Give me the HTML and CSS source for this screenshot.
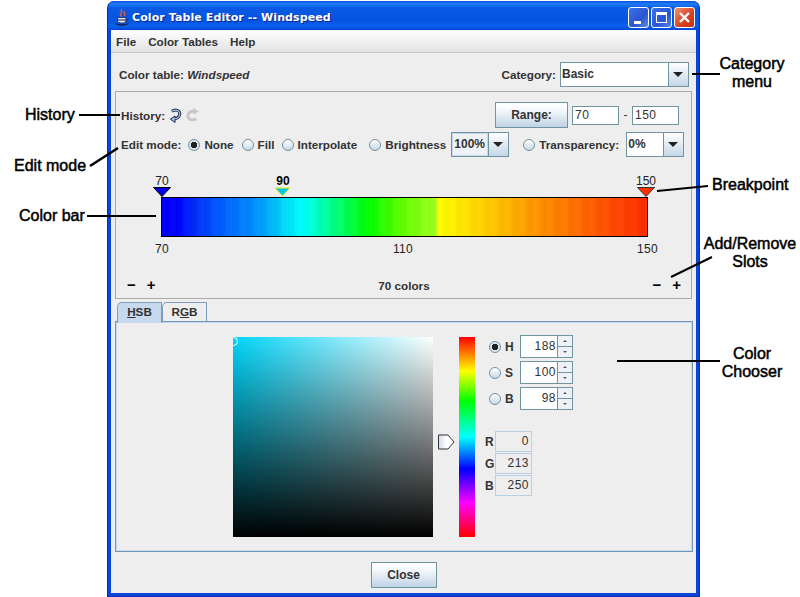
FILE: index.html
```html
<!DOCTYPE html>
<html lang="en">
<head>
    <meta charset="UTF-8">
    <title>Color Table Editor -- Windspeed</title>
    <link rel="stylesheet" href="styles.css">
</head>
<body>
    <div class="window">
        <div class="titlebar">
            <svg class="java-icon" width="16" height="18" viewBox="0 0 16 18">
                <path d="M8 1c-2 2 1 3-1 4.500s1 3 1 3M10.500 3c-1 2 1 2.500 0 5" fill="none" stroke="#e0583a" stroke-width="1.500"/>
                <path d="M3.500 9.500h8.500v3c0 2-2 2.500-4.200 2.500s-4.300-.5-4.300-2.500z" fill="#e8ecf4" stroke="#2b3560"/>
                <path d="M3.500 12h8.500" stroke="#2b3560" stroke-width="1.200"/>
                <path d="M12 10.500c2.500 0 2 3-.5 3" fill="none" stroke="#2b3560"/>
                <path d="M1.500 15.500c3 2 9.500 2 13 0" fill="none" stroke="#1a2248" stroke-width="1.300"/>
            </svg>
            <span class="title-text">Color Table Editor -- Windspeed</span>
            <div class="win-buttons">
                <div class="win-btn"><span class="min-glyph"></span></div>
                <div class="win-btn"><span class="max-glyph"></span></div>
                <div class="win-btn win-close">
                    <svg width="13" height="13" viewBox="0 0 13 13"><path d="M2 2l9 9M11 2l-9 9" stroke="#fff" stroke-width="2.400"/></svg>
                </div>
            </div>
        </div>

        <div class="menubar">
            <span>File</span>
            <span>Color Tables</span>
            <span>Help</span>
        </div>

        <div class="client">
            <div class="header-row">
                <span class="lbl">Color table: <em>Windspeed</em></span>
                <div class="category">
                    <span class="lbl">Category:</span>
                    <div class="combo combo-cat">
                        <span class="combo-value">Basic</span>
                        <span class="combo-arrow"></span>
                    </div>
                </div>
            </div>

            <div class="editor-panel">
                <div class="row-history">
                    <div class="history">
                        <span class="lbl">History:</span>
                        <svg class="hist-icon" width="13" height="15" viewBox="0 0 14 16">
                            <path d="M3 3.500C6 1.500 10.500 1.500 11.500 5c.8 3.500-2 6-5 6.500l-2.500 .5" fill="none" stroke="#14224a" stroke-width="3.200"/>
                            <path d="M6.500 8.500L1.500 12l5 3.500z" fill="#a9c0e2" stroke="#14224a"/>
                            <path d="M3 3.500C6 1.500 10.500 1.500 11.500 5c.8 3.500-2 6-5 6.500l-1.500 .3" fill="none" stroke="#a9c0e2" stroke-width="1.300"/>
                        </svg>
                        <svg class="hist-icon" width="13" height="15" viewBox="0 0 14 16">
                            <path d="M9 3.500C5 3 2 5 2 8.500s4.500 5.500 9 3" fill="none" stroke="#c6c6c6" stroke-width="3"/>
                            <path d="M8 0l5.500 3.500L8 7.500z" fill="#c6c6c6"/>
                        </svg>
                    </div>
                    <div class="range">
                        <button class="btn btn-range" type="button">Range:</button>
                        <span class="field range-field">70</span>
                        <span class="range-dash">-</span>
                        <span class="field range-field">150</span>
                    </div>
                </div>

                <div class="row-mode">
                    <span class="lbl mode-lbl">Edit mode:</span>
                    <span class="radio radio-on"></span><span class="lbl mode-none">None</span>
                    <span class="radio"></span><span class="lbl mode-fill">Fill</span>
                    <span class="radio"></span><span class="lbl mode-interp">Interpolate</span>
                    <span class="radio"></span><span class="lbl mode-bright">Brightness</span>
                    <div class="combo combo-bright">
                        <span class="combo-value combo-focus">100%</span>
                        <span class="combo-arrow"></span>
                    </div>
                    <span class="radio radio-transp"></span><span class="lbl mode-transp">Transparency:</span>
                    <div class="combo combo-transp">
                        <span class="combo-value">0%</span>
                        <span class="combo-arrow"></span>
                    </div>
                </div>

                <div class="bar-wrap">
                    <div class="bar"></div>
                    <div class="bp" style="left: 1px">
                        <span class="bp-val">70</span>
                        <svg width="18" height="10" viewBox="0 0 18 10"><path d="M0.500 0.500h17L9 9.500z" fill="#0000e8" stroke="#000"/></svg>
                    </div>
                    <div class="bp" style="left: 122px">
                        <span class="bp-val bp-active">90</span>
                        <svg width="18" height="10" viewBox="0 0 18 10"><path d="M1 1h15L8.500 9z" fill="#00c8f0" stroke="#ffe800"/></svg>
                    </div>
                    <div class="bp" style="left: 485px">
                        <span class="bp-val">150</span>
                        <svg width="18" height="10" viewBox="0 0 18 10"><path d="M0.500 0.500h17L9 9.500z" fill="#ff3000" stroke="#333"/></svg>
                    </div>
                </div>
                <div class="scale">
                    <span>70</span>
                    <span>110</span>
                    <span>150</span>
                </div>

                <div class="slots">
                    <div class="slot-btns"><span>&minus;</span><span>+</span></div>
                    <span class="lbl">70 colors</span>
                    <div class="slot-btns"><span>&minus;</span><span>+</span></div>
                </div>
            </div>

            <div class="tabs">
                <span class="tab tab-on"><u>H</u>SB</span>
                <span class="tab">R<u>G</u>B</span>
            </div>
            <div class="tab-panel">
                <div class="sv-box"><span class="sv-mark"></span></div>
                <div class="hue-strip">
                    <svg class="hue-thumb" width="17" height="16" viewBox="0 0 17 16">
                        <defs>
                            <linearGradient id="thumbfill" x1="0" x2="1" y1="0" y2="0">
                                <stop offset="0" stop-color="#cfdcea"/>
                                <stop offset="0.500" stop-color="#fff"/>
                                <stop offset="1" stop-color="#fff"/>
                            </linearGradient>
                        </defs>
                        <path d="M0.500 1h9.500l6 7-6 7H0.500z" fill="url(#thumbfill)" stroke="#333"/>
                    </svg>
                </div>
                <div class="chooser-side">
                    <div class="hsb-row">
                        <span class="radio radio-on"></span><span class="lbl hsb-lbl">H</span>
                        <div class="spinner"><span class="spin-val">188</span><span class="spin-arrows"><i class="up"></i><i class="down"></i></span></div>
                    </div>
                    <div class="hsb-row">
                        <span class="radio"></span><span class="lbl hsb-lbl">S</span>
                        <div class="spinner"><span class="spin-val">100</span><span class="spin-arrows"><i class="up"></i><i class="down"></i></span></div>
                    </div>
                    <div class="hsb-row">
                        <span class="radio"></span><span class="lbl hsb-lbl">B</span>
                        <div class="spinner"><span class="spin-val">98</span><span class="spin-arrows"><i class="up"></i><i class="down"></i></span></div>
                    </div>
                    <div class="rgb-rows">
                        <div class="rgb-row"><span class="lbl rgb-lbl">R</span><span class="rgb-val">0</span></div>
                        <div class="rgb-row"><span class="lbl rgb-lbl">G</span><span class="rgb-val">213</span></div>
                        <div class="rgb-row"><span class="lbl rgb-lbl">B</span><span class="rgb-val">250</span></div>
                    </div>
                </div>
            </div>

            <div class="footer">
                <button class="btn btn-close" type="button">Close</button>
            </div>
        </div>
    </div>

    <!-- callouts around the window -->
    <svg class="callout-lines" width="800" height="597" viewBox="0 0 800 597">
        <g stroke="#000" stroke-width="2" fill="none">
            <path d="M79 115H120"/>
            <path d="M90 166L118 148" stroke-width="2.500"/>
            <path d="M87 216H156"/>
            <path d="M692 74H720"/>
            <path d="M657 191L708 186"/>
            <path d="M671 277L712 257"/>
            <path d="M617 361H720"/>
        </g>
    </svg>
    <div class="note" style="left: 25px; top: 106px">History</div>
    <div class="note" style="left: 14px; top: 157px">Edit mode</div>
    <div class="note" style="left: 19px; top: 207px">Color bar</div>
    <div class="note note-c" style="left: 702px; top: 55px">Category<br>menu</div>
    <div class="note" style="left: 712px; top: 176px">Breakpoint</div>
    <div class="note note-c" style="left: 700px; top: 235px">Add/Remove<br>Slots</div>
    <div class="note note-c" style="left: 702px; top: 345px">Color<br>Chooser</div>
</body>
</html>
```

FILE: styles.css
```css
* {
    box-sizing: border-box;
}

html, body {
    margin: 0;
    padding: 0;
    height: 597px;
    overflow: hidden;
    background: #fff;
}

body {
    position: relative;
    font-family: "Liberation Sans", Arial, sans-serif;
    font-size: 12px;
    color: #333;
}

.window {
    margin: 1px 0 0 107px;
    width: 593px;
    height: 596px;
    display: flex;
    flex-direction: column;
    background: #0a45d8;
    border-radius: 7px 7px 0 0;
    padding: 0 3px 3px;
    border-left: 1px solid #0831a8;
    border-right: 1px solid #0831a8;
    border-bottom: 1px solid #0831a8;
}

.titlebar {
    height: 29px;
    margin: 0 -3px;
    padding: 3px 4px 0 6px;
    display: flex;
    align-items: center;
    border-radius: 7px 7px 0 0;
    background: linear-gradient(#0a52e0 0, #1f7cf4 3px, #0a5ae4 7px, #0553e2 20px, #0a62ee 25px, #0446d4 29px);
}

.java-icon {
    flex: none;
}

.title-text {
    margin-left: 2px;
    font-family: "DejaVu Sans", Verdana, sans-serif;
    font-weight: bold;
    font-size: 11px;
    letter-spacing: 0.1px;
    color: #fff;
    text-shadow: 1px 1px 0 #0a2a90;
}

.win-buttons {
    margin-left: auto;
    display: flex;
    gap: 2px;
}

.win-btn {
    width: 21px;
    height: 21px;
    border: 1px solid #fff;
    border-radius: 3px;
    background: linear-gradient(135deg, #3c70e8, #2a55d0 60%, #5a8af0);
    display: flex;
    align-items: center;
    justify-content: center;
    position: relative;
}

.win-close {
    background: linear-gradient(135deg, #f09070, #d84020 60%, #c83010);
}

.min-glyph {
    position: absolute;
    left: 5px;
    bottom: 3px;
    width: 7px;
    height: 3px;
    background: #fff;
}

.max-glyph {
    width: 11px;
    height: 11px;
    border: 1px solid #fff;
    border-top-width: 3px;
}

.menubar {
    height: 23px;
    padding-left: 5px;
    display: flex;
    align-items: center;
    gap: 12px;
    font-weight: bold;
    font-size: 11.700px;
    background: linear-gradient(#fff, #e2e2e2);
    border-bottom: 1px solid #c8c8c8;
}

.client {
    flex: 1;
    display: flex;
    flex-direction: column;
    background-color: #eee;
    background-image: conic-gradient(#f0f0f0 25%, #ececec 0 50%, #f0f0f0 0 75%, #ececec 0);
    background-size: 2px 2px;
}

.lbl {
    font-weight: bold;
    font-size: 11.700px;
    color: #333;
    white-space: nowrap;
}

.lbl em {
    font-style: italic;
}

.header-row {
    margin-top: 9px;
    height: 25px;
    padding: 0 7px 0 8px;
    display: flex;
    align-items: center;
    justify-content: space-between;
}

.category {
    display: flex;
    align-items: center;
    gap: 4px;
}

.combo {
    display: flex;
    flex: none;
    height: 25px;
    border: 1px solid #6f939f;
    background: #fff;
}

.combo-cat {
    width: 129px;
}

.combo-bright {
    width: 58px;
}

.combo-transp {
    width: 58px;
}

.combo-value {
    flex: 1;
    padding: 0 1px;
    line-height: 23px;
    font-weight: bold;
    font-size: 12px;
    color: #333;
}

.combo-focus {
    padding-left: 1px;
    background: #eef2f7;
    border: 1px solid #c6d7ea;
    line-height: 21px;
}

.combo-arrow {
    width: 20px;
    flex: none;
    border-left: 1px solid #6f939f;
    background: linear-gradient(#fff, #c4d6e8);
    position: relative;
}

.combo-arrow::after {
    content: "";
    position: absolute;
    left: 4px;
    top: 9px;
    border-left: 5px solid transparent;
    border-right: 5px solid transparent;
    border-top: 5px solid #222;
}

.editor-panel {
    margin: 4px 4px 0;
    height: 208px;
    border: 1px solid #aaa;
}

.row-history {
    margin-top: 10px;
    height: 26px;
    padding: 0 12px 0 5px;
    display: flex;
    align-items: center;
    justify-content: space-between;
}

.history {
    display: flex;
    align-items: center;
    gap: 4px;
}

.range {
    display: flex;
    align-items: center;
}

.btn {
    font-family: "Liberation Sans", Arial, sans-serif;
    font-weight: bold;
    font-size: 12px;
    color: #333;
    border: 1px solid #6f939f;
    background: linear-gradient(#fff 10%, #eef3f8 40%, #bfd2e6);
    padding: 0;
}

.btn-range {
    width: 73px;
    height: 26px;
}

.field {
    border: 1px solid #6f939f;
    background: #fff;
    font-size: 12px;
    color: #333;
    height: 19px;
    line-height: 17px;
    padding-left: 2px;
    letter-spacing: 0.5px;
}

.range-field {
    width: 47px;
}

.btn-range + .range-field {
    margin-left: 4px;
}

.range-dash {
    width: 13px;
    text-align: center;
}

.row-mode {
    margin-top: 4px;
    height: 25px;
    padding: 0 7px 0 5px;
    display: flex;
    align-items: center;
}

.mode-lbl {
    margin-right: 7px;
}

.mode-none {
    margin-right: 8px;
}

.mode-fill {
    margin-right: 7px;
}

.mode-interp {
    margin-right: 12px;
}

.mode-bright {
    margin-right: 5px;
}

.mode-transp {
    margin-right: 7px;
}

.radio {
    width: 12px;
    height: 12px;
    flex: none;
    margin-right: 4px;
    border-radius: 50%;
    border: 1px solid #6f939f;
    background: linear-gradient(#fff, #c8d8e8);
}

.radio-on {
    background: radial-gradient(circle, #222 0 3px, #dce6f0 3.500px);
}

.radio-transp {
    margin-left: 14px;
}

.bar-wrap {
    position: relative;
    margin: 40px 0 0 45px;
    width: 487px;
    height: 40px;
}

.bar {
    position: relative;
    height: 40px;
    border: 1px solid #000;
    background: linear-gradient(90deg,
        #0000ff 0, #0000ff 3%, #0030fa 7%, #0060ff 12.500%, #0090ff 19.300%,
        #00b8f8 22.800%, #00d5fa 24.800%, #00ffff 29%, #00ff99 34.300%,
        #00ff00 42.500%, #60ff00 49.500%, #a0ff20 56.500%, #ffff00 57%,
        #ffc800 68%, #ff9900 76%, #ff6000 88%, #ff2a00 100%);
}

/* the real bar is stepped, one band per color slot */
.bar::after {
    content: "";
    position: absolute;
    inset: 0;
    background: repeating-linear-gradient(90deg, rgba(0, 0, 0, 0.02) 0 7px, rgba(255, 255, 255, 0.02) 7px 14px);
}

.bp {
    position: absolute;
    bottom: 100%;
    width: 30px;
    margin-left: -15px;
    display: flex;
    flex-direction: column;
    align-items: center;
}

.bp svg {
    display: block;
}

.bp-val {
    font-size: 12px;
    line-height: 14px;
    margin-bottom: -1px;
    color: #222;
}

.bp-active {
    font-weight: bold;
    color: #000;
}

.scale {
    margin: 5px 0 0 39px;
    width: 503px;
    display: flex;
    justify-content: space-between;
    font-size: 12px;
    line-height: 14px;
    color: #222;
    letter-spacing: 0.3px;
}

.slots {
    margin-top: 22px;
    padding: 0 10px 0 11px;
    display: flex;
    align-items: center;
    justify-content: space-between;
}

.slot-btns {
    display: flex;
    gap: 11px;
    font-weight: bold;
    font-size: 15px;
    line-height: 14px;
    color: #000;
}

.tabs {
    margin-top: 3px;
    height: 19px;
    padding-left: 6px;
    display: flex;
    position: relative;
    z-index: 1;
}

.tab {
    width: 45px;
    height: 19px;
    border: 1px solid #7f9db9;
    border-bottom: none;
    border-radius: 5px 0 0 0;
    text-align: center;
    font-weight: bold;
    font-size: 11.700px;
    line-height: 18px;
    color: #333;
}

.tab-on {
    height: 21px;
    background: #c6d9ee;
}

.tab-panel {
    margin: 0 3px 0 4px;
    height: 231px;
    display: flex;
    padding: 15px 0 0 117px;
    border: 1px solid #7496b6;
    box-shadow: inset 0 0 0 1px #c6d9ee;
}

.sv-box {
    position: relative;
    overflow: hidden;
    width: 200px;
    height: 200px;
    background:
        linear-gradient(rgba(0, 0, 0, 0), #000),
        linear-gradient(90deg, #00d5fa, #fff);
}

.sv-mark {
    position: absolute;
    left: -4px;
    top: 0;
    width: 9px;
    height: 9px;
    border: 1px solid #fff;
    border-radius: 50%;
}

.hue-strip {
    position: relative;
    margin-left: 26px;
    width: 16px;
    height: 200px;
    background: linear-gradient(#ff0000, #ffff00 17%, #00ff00 32%, #00ffff 50%, #0000ff 66%, #ff00ff 83%, #ff0000);
}

.hue-thumb {
    position: absolute;
    left: -21px;
    top: 97px;
}

.chooser-side {
    margin: -2px 0 0 14px;
    width: 84px;
}

.hsb-row {
    display: flex;
    align-items: center;
    height: 23px;
    margin-bottom: 3px;
}

.hsb-lbl {
    width: 15px;
    font-size: 12px;
}

.spinner {
    width: 53px;
    height: 23px;
    display: flex;
    border: 1px solid #6f939f;
    background: #fff;
}

.spin-val {
    flex: 1;
    text-align: right;
    padding-right: 1px;
    line-height: 21px;
    font-size: 12px;
    color: #333;
    letter-spacing: 0.5px;
}

.spin-arrows {
    width: 15px;
    display: flex;
    flex-direction: column;
    border-left: 1px solid #6f939f;
}

.spin-arrows i {
    flex: 1;
    position: relative;
    background: #eef2f6;
}

.spin-arrows .down {
    border-top: 1px solid #6f939f;
}

.spin-arrows i::after {
    content: "";
    position: absolute;
    left: 5px;
    top: 4px;
    border-left: 2px solid transparent;
    border-right: 2px solid transparent;
}

.spin-arrows .up::after {
    border-bottom: 2px solid #555;
}

.spin-arrows .down::after {
    border-top: 2px solid #555;
}

.rgb-rows {
    margin: 21px 0 0 -4px;
}

.rgb-row {
    display: flex;
    align-items: center;
    height: 21px;
    margin-bottom: 1px;
}

.rgb-lbl {
    width: 10px;
    font-size: 12px;
}

.rgb-val {
    width: 37px;
    height: 21px;
    line-height: 19px;
    border: 1px solid #b8cfe5;
    text-align: right;
    padding-right: 2px;
    font-size: 12px;
    color: #333;
    letter-spacing: 0.5px;
}

.footer {
    flex: 1;
    display: flex;
    justify-content: center;
    padding-top: 10px;
}

.btn-close {
    width: 66px;
    height: 26px;
}

.callout-lines {
    position: absolute;
    left: 0;
    top: 0;
    pointer-events: none;
}

.note {
    position: absolute;
    font-size: 16px;
    line-height: 18px;
    -webkit-text-stroke: 0.5px #000;
    color: #000;
    white-space: nowrap;
}

.note-c {
    width: 100px;
    text-align: center;
}
```
